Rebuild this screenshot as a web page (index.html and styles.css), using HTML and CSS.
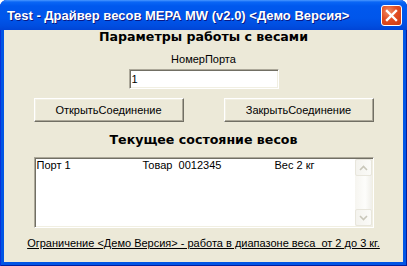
FILE: index.html
```html
<!DOCTYPE html>
<html lang="ru">

<head>
  <meta charset="UTF-8">
  <meta name="viewport" content="width=device-width, initial-scale=1.0">
  <title>Test - Драйвер весов МЕРА MW</title>
  <link rel="stylesheet" href="styles.css">
</head>

<body>
  <div class="window">
    <div class="titlebar">
      <span class="title">Test - Драйвер весов МЕРА MW (v2.0) &lt;Демо Версия&gt;</span>
      <span class="close">
        <svg width="13" height="13" viewBox="0 0 13 13">
          <path d="M2 2 L11 11 M11 2 L2 11" stroke="#fff" stroke-width="2.4" stroke-linecap="square" />
        </svg>
      </span>
    </div>
    <div class="client">
      <h1 class="heading">Параметры работы с весами</h1>
      <label class="label" for="port">НомерПорта</label>
      <input class="field" id="port" type="text" value="1">
      <div class="buttons">
        <button class="btn">ОткрытьСоединение</button>
        <button class="btn">ЗакрытьСоединение</button>
      </div>
      <h2 class="heading heading-state">Текущее состояние весов</h2>
      <div class="listbox">
        <div class="rows">
          <div class="row">
            <span class="col-port">Порт 1</span>
            <span class="col-item">Товар&nbsp; 0012345</span>
            <span>Вес 2 кг</span>
          </div>
        </div>
        <div class="scrollbar">
          <span class="sb-btn">
            <svg width="9" height="6" viewBox="0 0 9 6"><path d="M1 5 L4.5 1.5 L8 5" fill="none" stroke="#c9c7ba" stroke-width="1.6" /></svg>
          </span>
          <span class="sb-track"></span>
          <span class="sb-btn">
            <svg width="9" height="6" viewBox="0 0 9 6"><path d="M1 1 L4.5 4.5 L8 1" fill="none" stroke="#c9c7ba" stroke-width="1.6" /></svg>
          </span>
        </div>
      </div>
      <a class="limit" href="#">Ограничение &lt;Демо Версия&gt; - работа в диапазоне веса&nbsp; от 2 до 3 кг.</a>
    </div>
  </div>
</body>

</html>
```

FILE: styles.css
```css
* {
  margin: 0;
  padding: 0;
  box-sizing: border-box;
}

body {
  background: #fff;
  font-family: "Liberation Sans", Arial, sans-serif;
  font-size: 11px;
  color: #000;
}

.window {
  display: flex;
  flex-direction: column;
  width: 407px;
  height: 266px;
  background: #0055e5;
  border-radius: 7px 7px 0 0;
  box-shadow: inset 1px 0 #0831d9, inset -1px 0 #001ea0, inset 0 -1px #001ea0;
  overflow: hidden;
}

.titlebar {
  display: flex;
  align-items: center;
  justify-content: space-between;
  height: 30px;
  padding: 1px 5px 0 7px;
  background: linear-gradient(#4a98ff 0, #0a66f6 2px, #0058ee 6px, #0056eb 18px, #004ddf 26px, #0044d6 30px);
}

.title {
  color: #fff;
  font-family: "Liberation Sans", Arial, sans-serif;
  font-weight: bold;
  font-size: 13px;
  text-shadow: 1px 1px #0a1883;
  white-space: nowrap;
}

.close {
  display: flex;
  align-items: center;
  justify-content: center;
  width: 21px;
  height: 21px;
  border: 1px solid #fff;
  border-radius: 3px;
  background: radial-gradient(circle at 35% 30%, #f08e68 0, #e24d22 45%, #cc3a12 100%);
}

.client {
  display: flex;
  flex-direction: column;
  align-items: center;
  flex: 1;
  margin: 0 4px 4px 4px;
  background: #ece9d8;
}

.heading {
  font-family: "DejaVu Sans", Verdana, sans-serif;
  font-size: 12.6px;
  font-weight: bold;
  line-height: 14px;
}

.label {
  margin-top: 9px;
  line-height: 13px;
}

.field {
  width: 150px;
  height: 20px;
  margin-top: 3px;
  padding: 0 2px;
  font: 11px "Liberation Sans", Arial, sans-serif;
  background: #fff;
  border: 1px solid;
  border-color: #aca899 #fff #fff #aca899;
  box-shadow: inset 1px 1px #716f64, inset -1px -1px #f1efe2;
  outline: none;
}

.buttons {
  display: flex;
  gap: 40px;
  margin-top: 9px;
}

.btn {
  width: 150px;
  height: 24px;
  font: 11px "Liberation Sans", Arial, sans-serif;
  background: #ece9d8;
  border: 1px solid;
  border-color: #fff #716f64 #716f64 #fff;
  box-shadow: inset -1px -1px #aca899, inset 1px 1px #f1efe2;
}

.heading-state {
  margin-top: 11px;
}

.listbox {
  display: flex;
  width: 340px;
  height: 71px;
  margin-top: 10px;
  background: #fff;
  border: 1px solid;
  border-color: #aca899 #fff #fff #aca899;
  box-shadow: inset 1px 1px #716f64, inset -1px -1px #f1efe2;
  padding: 1px;
}

.rows {
  flex: 1;
  padding-left: 1px;
}

.row {
  display: flex;
  line-height: 13px;
}

.col-port {
  width: 106px;
}

.col-item {
  width: 132px;
}

.scrollbar {
  display: flex;
  flex-direction: column;
  width: 17px;
  background: linear-gradient(90deg, #f6f5f0, #fdfdfb 60%, #f0efe9);
}

.sb-btn {
  display: flex;
  align-items: center;
  justify-content: center;
  height: 17px;
  border: 1px solid #e8e6dc;
  border-radius: 2px;
  background: linear-gradient(90deg, #f4f3ee, #fbfbf8);
}

.sb-track {
  flex: 1;
}

.limit {
  margin-top: 9px;
  line-height: 13px;
  color: #000;
  text-decoration: underline;
}
```
